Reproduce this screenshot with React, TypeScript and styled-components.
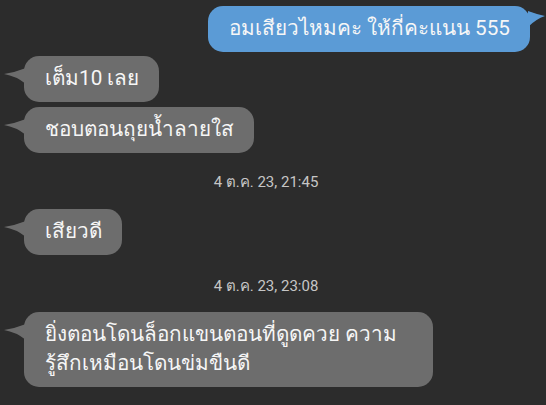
import React from "react";
import styled, { createGlobalStyle } from "styled-components";

const Global = createGlobalStyle`
  html, body { margin: 0; padding: 0; background: #2c2c2c; }
  body { font-family: Roboto, "Noto Sans", "DejaVu Sans", sans-serif; }
`;

const Screen = styled.div`
  width: 546px;
  height: 405px;
  background: #2c2c2c;
  overflow: hidden;
  display: flex;
  flex-direction: column;
  padding-top: 6px;
  box-sizing: border-box;
`;

const Row = styled.div<{ $mine?: boolean; $mt?: number }>`
  display: flex;
  justify-content: ${(p) => (p.$mine ? "flex-end" : "flex-start")};
  padding: ${(p) => (p.$mine ? "0 16px 0 0" : "0 0 0 24px")};
  margin-top: ${(p) => p.$mt ?? 0}px;
`;

const Bubble = styled.div<{ $mine?: boolean }>`
  position: relative;
  max-width: 368px;
  padding: 8px 20px 9px 21px;
  border-radius: 15px;
  background: ${(p) => (p.$mine ? "#5b9bd6" : "#6d6d6d")};
  color: #f6f6f6;
  font-size: 20.7px;
  line-height: 29px;
  letter-spacing: 0;
`;

const Tail = styled.svg<{ $mine?: boolean }>`
  position: absolute;
  top: ${(p) => (p.$mine ? 5 : 12)}px;
  ${(p) => (p.$mine ? "right: -16px;" : "left: -20px;")}
  width: ${(p) => (p.$mine ? 18 : 22)}px;
  height: 17px;
`;

const Stamp = styled.div<{ $mt: number }>`
  margin-top: ${(p) => p.$mt}px;
  text-align: center;
  color: #c6c6c6;
  font-size: 15px;
  line-height: 20px;
  padding-right: 14px;
`;

function Msg({ mine, mt, children }: { mine?: boolean; mt?: number; children: React.ReactNode }) {
  return (
    <Row $mine={mine} $mt={mt}>
      <Bubble $mine={mine}>
        {mine ? (
          <Tail $mine viewBox="0 0 18 17">
            <path d="M0 0 Q8 3 17 5 Q8 8 0 16 Z" fill="#5b9bd6" />
          </Tail>
        ) : (
          <Tail viewBox="0 0 22 17">
            <path d="M22 0 Q12 4 0 6 Q12 8 22 16 Z" fill="#6d6d6d" />
          </Tail>
        )}
        {children}
      </Bubble>
    </Row>
  );
}

export default function App() {
  return (
    <>
      <Global />
      <Screen>
        <Msg mine>อมเสียวไหมคะ ให้กี่คะแนน 555</Msg>
        <Msg mt={4}>เต็ม10 เลย</Msg>
        <Msg mt={5}>ชอบตอนถุยน้ำลายใส</Msg>
        <Stamp $mt={19}>4 ต.ค. 23, 21:45</Stamp>
        <Msg mt={17}>เสียวดี</Msg>
        <Stamp $mt={21}>4 ต.ค. 23, 23:08</Stamp>
        <Msg mt={16}>ยิ่งตอนโดนล็อกแขนตอนที่ดูดควย ความรู้สึกเหมือนโดนข่มขืนดี</Msg>
      </Screen>
    </>
  );
}
